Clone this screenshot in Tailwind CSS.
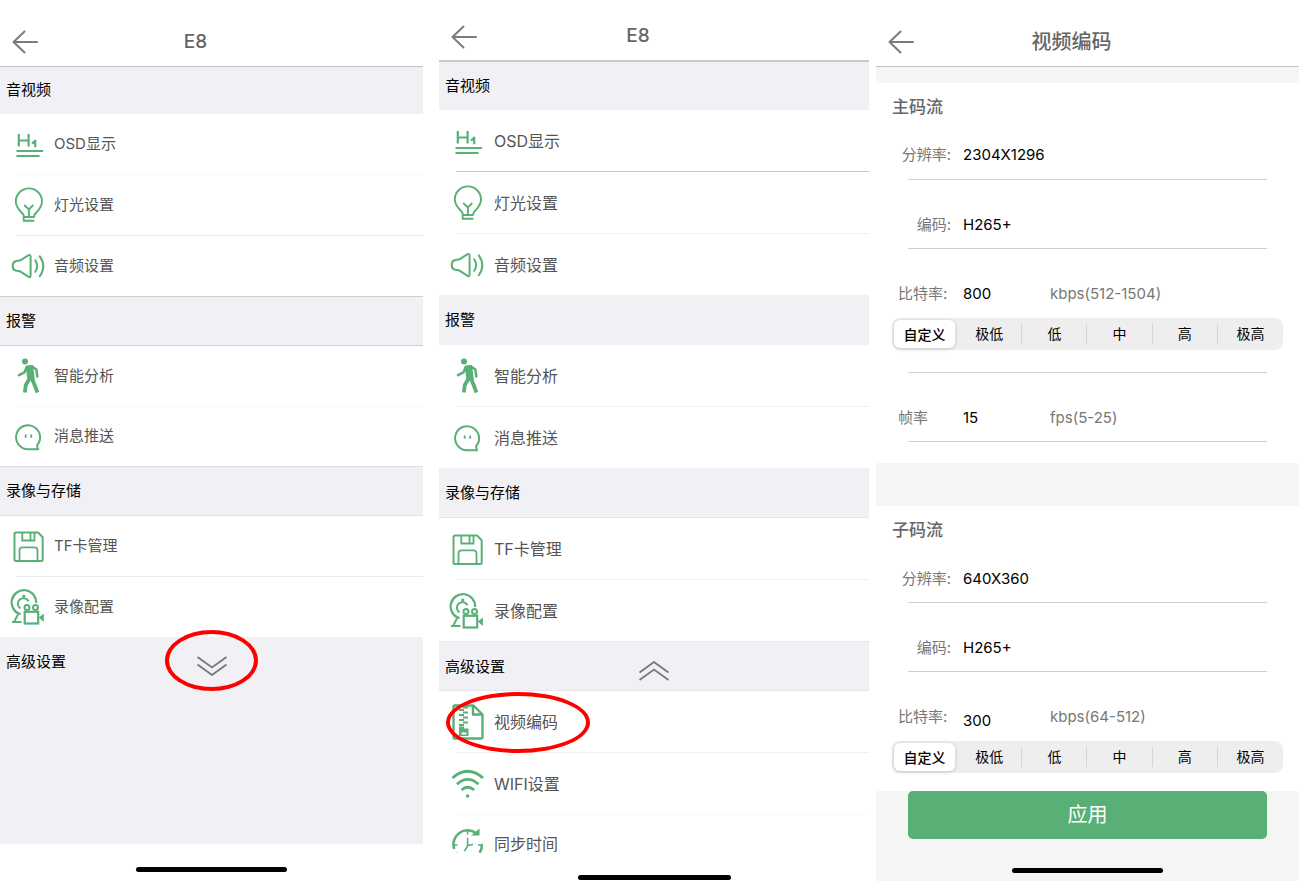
<!DOCTYPE html>
<html lang="zh-CN">
<head>
  <meta charset="UTF-8" />
  <meta name="viewport" content="width=device-width, initial-scale=1.0" />
  <title>E8 视频编码设置</title>
  <script src="https://cdn.jsdelivr.net/npm/@tailwindcss/browser@4"></script>
</head>
<body class="bg-white font-['Inter','Noto_Sans_CJK_SC',sans-serif]">

  <!-- 图标 -->
  <svg class="hidden">
    <symbol id="i-back" viewBox="0 0 26 24">
      <path d="M12.5 1.5 1.5 12l11 10.5M1.5 12H25" fill="none" stroke="#7b7b7b" stroke-width="2" stroke-linecap="round" stroke-linejoin="round" />
    </symbol>
    <symbol id="i-osd" viewBox="0 0 36 36">
      <path d="M8.8 8v12.5M18.6 8v12.5M8.8 14.5h9.8" fill="none" stroke="currentColor" stroke-width="2.2" />
      <path d="M25.2 13.8v7.4M25.4 14.6 22 17.6" fill="none" stroke="currentColor" stroke-width="2.2" />
      <path d="M6.5 25H33M6.5 30h23" fill="none" stroke="currentColor" stroke-width="2.2" />
    </symbol>
    <symbol id="i-light" viewBox="0 0 36 36">
      <path d="M13.7 34v-5.4C13.700 26 5.800 22.500 5.800 14.500a13.100 13.100 0 0 1 26.200 0c0 8-7.700 11.500-7.700 14.100V30" fill="none" stroke="currentColor" stroke-width="1.9" />
      <path d="M13 30h11.5M13 33.8h11.3M14.2 18l4.700 4.500 4.400-4.500M18.900 22.500V30" fill="none" stroke="currentColor" stroke-width="1.9" />
    </symbol>
    <symbol id="i-audio" viewBox="0 0 36 36">
      <path d="M5.5 13.2 10.5 12.3 18.2 7.3Q20.6 6.2 20.6 8.5V27.5Q20.6 30 18.2 28.7L10.5 23.6 5.5 22.6Q2.7 21.8 2.7 18T5.5 13.2Z" fill="none" stroke="currentColor" stroke-width="2" stroke-linejoin="round" />
      <path d="M25.3 12.3Q29 18 25.3 23.8M29.8 8.3Q36.8 18 29.8 28.3" fill="none" stroke="currentColor" stroke-width="2" stroke-linecap="round" />
    </symbol>
    <symbol id="i-walk" viewBox="0 0 36 36">
      <circle cx="15" cy="3.4" r="3" fill="currentColor" />
      <path d="M16.8 8.8 22 8.3 23.5 21 18.8 22Z" fill="currentColor" stroke="currentColor" stroke-width="2.4" stroke-linejoin="round" />
      <path d="M16.5 9.500 14.500 14.300 9 17.200M22 8.500 26.300 11.500 27.300 18.500" fill="none" stroke="currentColor" stroke-width="2.500" stroke-linejoin="round" stroke-linecap="round" />
      <path d="M19.500 20.500 15.800 27 14.800 34.500M22 20.500 24.800 27.500 27.500 34.500" fill="none" stroke="currentColor" stroke-width="3.800" stroke-linejoin="round" />
    </symbol>
    <symbol id="i-msg" viewBox="0 0 36 36">
      <path d="M18 30.2A12 12 0 1 1 27.200 26Q26.700 27.700 28.200 30.200Z" fill="none" stroke="currentColor" stroke-width="2" stroke-linejoin="round" />
      <path d="M15.700 15.500v3.200M21.200 15.500v3.200" stroke="currentColor" stroke-width="1.800" />
    </symbol>
    <symbol id="i-disk" viewBox="0 0 36 36">
      <path d="M6 4.500H28L32.700 9.200V31.500Q32.700 33 31.200 33H6Q4.500 33 4.500 31.500V6Q4.500 4.500 6 4.500Z" fill="none" stroke="currentColor" stroke-width="2" stroke-linejoin="round" />
      <path d="M12.300 4.500V12.500H24.500V4.500M20.500 5V12M9.500 33V22.500Q9.500 19.300 12.500 19.300H24.500Q27.500 19.300 27.500 22.500V33" fill="none" stroke="currentColor" stroke-width="1.800" />
    </symbol>
    <symbol id="i-cam" viewBox="0 0 36 36">
      <path d="M10.500 25.300A12.300 12.300 0 1 1 26.200 14" fill="none" stroke="currentColor" stroke-width="2.200" />
      <circle cx="13.800" cy="7" r="1.600" fill="currentColor" />
      <path d="M10.500 19.500A5.600 5.600 0 1 1 18.500 12.300" fill="none" stroke="currentColor" stroke-width="2" />
      <path d="M2 33H11.500M4.500 32 8 25.500" fill="none" stroke="currentColor" stroke-width="2" />
      <circle cx="17" cy="18.500" r="2.500" fill="white" stroke="currentColor" stroke-width="2" />
      <circle cx="25.500" cy="18.500" r="2.500" fill="white" stroke="currentColor" stroke-width="2" />
      <rect x="14.700" y="22.800" width="13.500" height="11.700" fill="white" stroke="currentColor" stroke-width="2.200" />
      <path d="M28.800 28.500 33.800 24.500V33Z" fill="currentColor" />
    </symbol>
    <symbol id="i-zip" viewBox="0 0 36 36">
      <path d="M6 1.500H24.500L33.500 10.500V33Q33.500 34.500 32 34.500H6Q4.500 34.500 4.500 33V3Q4.500 1.500 6 1.500Z" fill="none" stroke="currentColor" stroke-width="2.400" stroke-linejoin="round" />
      <path d="M24 2V10.500H33" fill="none" stroke="currentColor" stroke-width="2.400" />
      <path d="M14 3.500h5M10 6h5M14 8.500h5M10 11h5M14 13.500h5M10 16h5M14 18.500h5M10 21h5" stroke="currentColor" stroke-width="1.800" />
      <path d="M10 22.500H15V24.500H19.500V32H10Z" fill="currentColor" />
      <path d="M12.500 28.500h5v2h-5z" fill="white" />
    </symbol>
    <symbol id="i-wifi" viewBox="0 0 36 36">
      <path d="M3.500 12Q18.600-1.500 34 12M8 18.200Q18.600 8.500 29.500 18.200M12.500 24Q18.600 18.500 25 24" fill="none" stroke="currentColor" stroke-width="2.800" />
      <circle cx="18.600" cy="30" r="1.800" fill="currentColor" />
    </symbol>
    <symbol id="i-time" viewBox="0 0 36 36">
      <path d="M5.300 22A14 14 0 0 1 27 6.200M32.500 17Q33.500 22 30.500 25.500M7 26Q12 32 18.600 32.500" fill="none" stroke="currentColor" stroke-width="2.600" />
      <path d="M22 8.500H30.500V1.500Z" fill="currentColor" />
      <path d="M18.600 11V19L15.500 24M18.600 18.500 24 17.500M18.600 4V7.500M5 18H8.500M29 18H33" fill="none" stroke="currentColor" stroke-width="1.600" />
    </symbol>
  </svg>

  <div class="flex h-screen min-h-[881px]">

    <!-- 设置页：高级设置收起 -->
    <section class="flex min-w-0 flex-[423_1_0%] flex-col text-[15px] text-[#555]">
      <header class="flex h-[67px] shrink-0 items-center border-b border-[#c3c3c7] pt-[18px] pl-3">
        <button aria-label="返回"><svg class="h-6 w-[26px]"><use href="#i-back" /></svg></button>
        <h1 class="flex-1 pr-[70px] text-center text-[19px] font-medium text-[#666]">E8</h1>
      </header>

      <h2 class="flex h-[47px] shrink-0 items-center bg-[#f0f0f5] pl-[6px] text-black">音视频</h2>
      <ul>
        <li>
          <a href="#" class="flex h-[60px] items-center gap-2 pl-[10px]"><svg class="size-9 text-[#58b077]"><use href="#i-osd" /></svg>OSD显示</a>
          <hr class="ml-4 border-[#f8f8f8]">
        </li>
        <li>
          <a href="#" class="flex h-[60px] items-center gap-2 pl-[10px]"><svg class="size-9 text-[#58b077]"><use href="#i-light" /></svg>灯光设置</a>
          <hr class="ml-4 border-[#ececf0]">
        </li>
        <li>
          <a href="#" class="flex h-[60px] items-center gap-2 pl-[10px]"><svg class="size-9 text-[#58b077]"><use href="#i-audio" /></svg>音频设置</a>
        </li>
      </ul>

      <h2 class="flex h-[50px] shrink-0 items-center border-y border-[#cfcfd3] bg-[#f0f0f5] pl-[6px] text-black">报警</h2>
      <ul>
        <li>
          <a href="#" class="flex h-[60px] items-center gap-2 pl-[10px]"><svg class="size-9 text-[#58b077]"><use href="#i-walk" /></svg>智能分析</a>
          <hr class="ml-4 border-[#f8f8f8]">
        </li>
        <li>
          <a href="#" class="flex h-[59px] items-center gap-2 pl-[10px]"><svg class="size-9 text-[#58b077]"><use href="#i-msg" /></svg>消息推送</a>
        </li>
      </ul>

      <h2 class="flex h-[50px] shrink-0 items-center border-y border-[#e0e0e4] bg-[#f0f0f5] pl-[6px] text-black">录像与存储</h2>
      <ul>
        <li>
          <a href="#" class="flex h-[60px] items-center gap-2 pl-[10px]"><svg class="size-9 text-[#58b077]"><use href="#i-disk" /></svg>TF卡管理</a>
          <hr class="ml-4 border-[#ececf0]">
        </li>
        <li>
          <a href="#" class="flex h-[60px] items-center gap-2 pl-[10px]"><svg class="size-9 text-[#58b077]"><use href="#i-cam" /></svg>录像配置</a>
        </li>
      </ul>

      <div class="relative flex-1 bg-[#f0f0f5]">
        <button class="grid h-[50px] w-full grid-cols-[1fr_auto_1fr] items-center px-[6px] text-left text-black" aria-expanded="false">
          <span>高级设置</span>
          <svg class="mt-2 h-5 w-[30px]" viewBox="0 0 30 20"><path d="M.5 1 15 11.500 29.500 1M.5 8.500 15 19 29.500 8.500" fill="none" stroke="#777" stroke-width="1.800" /></svg>
        </button>
        <span class="pointer-events-none absolute -top-[7px] left-[39%] h-[61px] w-[93px] rounded-[50%] border-4 border-[#f00]"></span>
      </div>

      <footer class="flex h-[37px] shrink-0 items-center justify-center pt-[14px]">
        <div class="h-[5px] w-[151px] rounded-full bg-black"></div>
      </footer>
    </section>

    <!-- 设置页：高级设置展开 -->
    <section class="ml-4 flex min-w-0 flex-[430_1_0%] flex-col text-[16px] text-[#555]">
      <header class="flex h-[62px] shrink-0 items-center border-b-2 border-[#c9c9cb] pt-[13px] pl-3">
        <button aria-label="返回"><svg class="h-6 w-[26px]"><use href="#i-back" /></svg></button>
        <h1 class="flex-1 pr-[70px] text-center text-[19px] font-medium text-[#666]">E8</h1>
      </header>

      <div class="min-h-0 flex-1 overflow-hidden">
        <h2 class="flex h-12 items-center bg-[#f0f0f5] pl-[6px] text-[15px] text-black">音视频</h2>
        <ul>
          <li>
            <a href="#" class="flex h-[61px] items-center gap-[9px] pl-[10px]"><svg class="size-9 text-[#58b077]"><use href="#i-osd" /></svg>OSD显示</a>
            <hr class="ml-[17px] border-[#c8c8cc]">
          </li>
          <li>
            <a href="#" class="flex h-[61px] items-center gap-[9px] pl-[10px]"><svg class="size-9 text-[#58b077]"><use href="#i-light" /></svg>灯光设置</a>
            <hr class="ml-[17px] border-[#f0f0f3]">
          </li>
          <li>
            <a href="#" class="flex h-[61px] items-center gap-[9px] pl-[10px]"><svg class="size-9 text-[#58b077]"><use href="#i-audio" /></svg>音频设置</a>
          </li>
        </ul>

        <h2 class="flex h-[50px] items-center bg-[#f0f0f5] pt-px pl-[6px] text-[15px] text-black">报警</h2>
        <ul>
          <li>
            <a href="#" class="flex h-[61px] items-center gap-[9px] pl-[10px]"><svg class="size-9 text-[#58b077]"><use href="#i-walk" /></svg>智能分析</a>
            <hr class="ml-[17px] border-[#f0f0f3]">
          </li>
          <li>
            <a href="#" class="flex h-[61px] items-center gap-[9px] pl-[10px]"><svg class="size-9 text-[#58b077]"><use href="#i-msg" /></svg>消息推送</a>
          </li>
        </ul>

        <h2 class="flex h-[50px] items-center border-b border-[#e6e6ea] bg-[#f0f0f5] pt-[2px] pl-[6px] text-[15px] text-black">录像与存储</h2>
        <ul>
          <li>
            <a href="#" class="flex h-[61px] items-center gap-[9px] pl-[10px]"><svg class="size-9 text-[#58b077]"><use href="#i-disk" /></svg>TF卡管理</a>
            <hr class="ml-[17px] border-[#f0f0f3]">
          </li>
          <li>
            <a href="#" class="flex h-[61px] items-center gap-[9px] pl-[10px]"><svg class="size-9 text-[#58b077]"><use href="#i-cam" /></svg>录像配置</a>
          </li>
        </ul>

        <button class="grid h-[50px] w-full grid-cols-[1fr_auto_1fr] items-center border-y border-[#e6e6ea] bg-[#f0f0f5] px-[6px] pt-[2px] text-left text-[15px] text-black" aria-expanded="true">
          <span>高级设置</span>
          <svg class="mt-2 h-5 w-[30px]" viewBox="0 0 30 20"><path d="M.5 11.500 15 1 29.500 11.500M.5 19 15 8.500 29.500 19" fill="none" stroke="#777" stroke-width="1.800" /></svg>
        </button>
        <ul>
          <li class="relative">
            <a href="#" class="flex h-[61px] items-center gap-[9px] pl-[10px]"><svg class="size-9 text-[#58b077]"><use href="#i-zip" /></svg>视频编码</a>
            <hr class="ml-[17px] border-[#f0f0f3]">
            <span class="pointer-events-none absolute top-px left-[7px] h-[61px] w-36 rounded-[50%] border-4 border-[#f00]"></span>
          </li>
          <li>
            <a href="#" class="flex h-[61px] items-center gap-[9px] pl-[10px]"><svg class="size-9 text-[#58b077]"><use href="#i-wifi" /></svg>WIFI设置</a>
            <hr class="ml-[17px] border-[#f8f8f8]">
          </li>
          <!-- 最后一行只露出上半部分 -->
          <li>
            <a href="#" class="flex h-[38px] items-end gap-[9px] pl-[10px]">
              <svg class="h-[26px] w-9 text-[#58b077]"><use href="#i-time" width="36" height="36" /></svg>
              <span class="leading-[18px]">同步时间</span>
            </a>
          </li>
        </ul>
      </div>

      <footer class="flex h-7 shrink-0 items-end justify-center pb-px">
        <div class="h-[5px] w-[153px] rounded-full bg-black"></div>
      </footer>
    </section>

    <!-- 视频编码页 -->
    <section class="ml-[7px] flex min-w-0 flex-[423_1_0%] flex-col bg-[#f5f5f5] text-[15px] text-[#777]">
      <header class="flex h-[67px] shrink-0 items-center border-b border-[#c3c3c3] bg-white pt-[18px] pl-3">
        <button aria-label="返回"><svg class="h-6 w-[26px]"><use href="#i-back" /></svg></button>
        <h1 class="flex-1 pr-[70px] text-center text-[20px] font-medium text-[#666]">视频编码</h1>
      </header>

      <form class="mt-4 flex flex-1 flex-col">
        <div class="bg-white pb-[21px]">
          <h2 class="flex h-12 items-center pt-[2px] pl-4 text-[17px] font-medium text-[#666]">主码流</h2>
          <div class="flex h-12 items-center pt-px">
            <label for="main-res" class="w-[75px] text-right">分辨率:</label>
            <input id="main-res" value="2304X1296" class="ml-3 min-w-0 flex-1 text-black outline-none">
          </div>
          <hr class="mx-8 border-[#cfcfcf]">
          <div class="mt-5 flex h-12 items-center pt-[2px]">
            <label for="main-enc" class="w-[75px] text-right">编码:</label>
            <input id="main-enc" value="H265+" class="ml-3 min-w-0 flex-1 text-black outline-none">
          </div>
          <hr class="mx-8 border-[#cfcfcf]">
          <div class="mt-5 flex h-[49px] items-center pt-[2px]">
            <label for="main-rate" class="w-[75px] pl-[22px]">比特率:</label>
            <input id="main-rate" value="800" class="ml-3 w-[87px] text-black outline-none">
            <span>kbps(512-1504)</span>
          </div>
          <div class="mx-4 grid h-8 grid-cols-6 items-center rounded-lg bg-[#eee] text-[14px] text-black" role="group" aria-label="主码流比特率">
            <button type="button" aria-pressed="true" class="mx-[2px] h-7 rounded-md bg-white font-medium shadow-[0_1px_4px_rgba(0,0,0,0.18)]">自定义</button>
            <button type="button" class="h-5 border-r border-[#d5d5d5] leading-5">极低</button>
            <button type="button" class="h-5 border-r border-[#d5d5d5] leading-5">低</button>
            <button type="button" class="h-5 border-r border-[#d5d5d5] leading-5">中</button>
            <button type="button" class="h-5 border-r border-[#d5d5d5] leading-5">高</button>
            <button type="button" class="h-5 leading-5">极高</button>
          </div>
          <hr class="mx-8 mt-[22px] border-[#cfcfcf]">
          <div class="mt-5 flex h-12 items-center pt-[2px]">
            <label for="main-fps" class="w-[75px] pl-[22px]">帧率</label>
            <input id="main-fps" value="15" class="ml-3 w-[87px] text-black outline-none">
            <span>fps(5-25)</span>
          </div>
          <hr class="mx-8 border-[#cfcfcf]">
        </div>

        <div class="mt-[43px] bg-white pb-[18px]">
          <h2 class="flex h-12 items-center pt-[2px] pl-4 text-[17px] font-medium text-[#666]">子码流</h2>
          <div class="flex h-12 items-center pt-[2px]">
            <label for="sub-res" class="w-[75px] text-right">分辨率:</label>
            <input id="sub-res" value="640X360" class="ml-3 min-w-0 flex-1 text-black outline-none">
          </div>
          <hr class="mx-8 border-[#cfcfcf]">
          <div class="mt-5 flex h-12 items-center pt-[2px]">
            <label for="sub-enc" class="w-[75px] text-right">编码:</label>
            <input id="sub-enc" value="H265+" class="ml-3 min-w-0 flex-1 text-black outline-none">
          </div>
          <hr class="mx-8 border-[#cfcfcf]">
          <div class="mt-5 flex h-[49px] items-center pt-[2px]">
            <label for="sub-rate" class="w-[75px] pl-[22px]">比特率:</label>
            <input id="sub-rate" value="300" class="ml-3 w-[87px] pt-2 text-black outline-none">
            <span>kbps(64-512)</span>
          </div>
          <div class="mx-4 grid h-8 grid-cols-6 items-center rounded-lg bg-[#eee] text-[14px] text-black" role="group" aria-label="子码流比特率">
            <button type="button" aria-pressed="true" class="mx-[2px] h-7 rounded-md bg-white font-medium shadow-[0_1px_4px_rgba(0,0,0,0.18)]">自定义</button>
            <button type="button" class="h-5 border-r border-[#d5d5d5] leading-5">极低</button>
            <button type="button" class="h-5 border-r border-[#d5d5d5] leading-5">低</button>
            <button type="button" class="h-5 border-r border-[#d5d5d5] leading-5">中</button>
            <button type="button" class="h-5 border-r border-[#d5d5d5] leading-5">高</button>
            <button type="button" class="h-5 leading-5">极高</button>
          </div>
        </div>

        <button type="submit" class="mx-8 h-12 rounded-[5px] bg-[#58b077] text-[20px] text-white">应用</button>
      </form>

      <footer class="flex justify-center pb-2">
        <div class="h-[5px] w-[151px] rounded-full bg-black"></div>
      </footer>
    </section>

  </div>
</body>
</html>
